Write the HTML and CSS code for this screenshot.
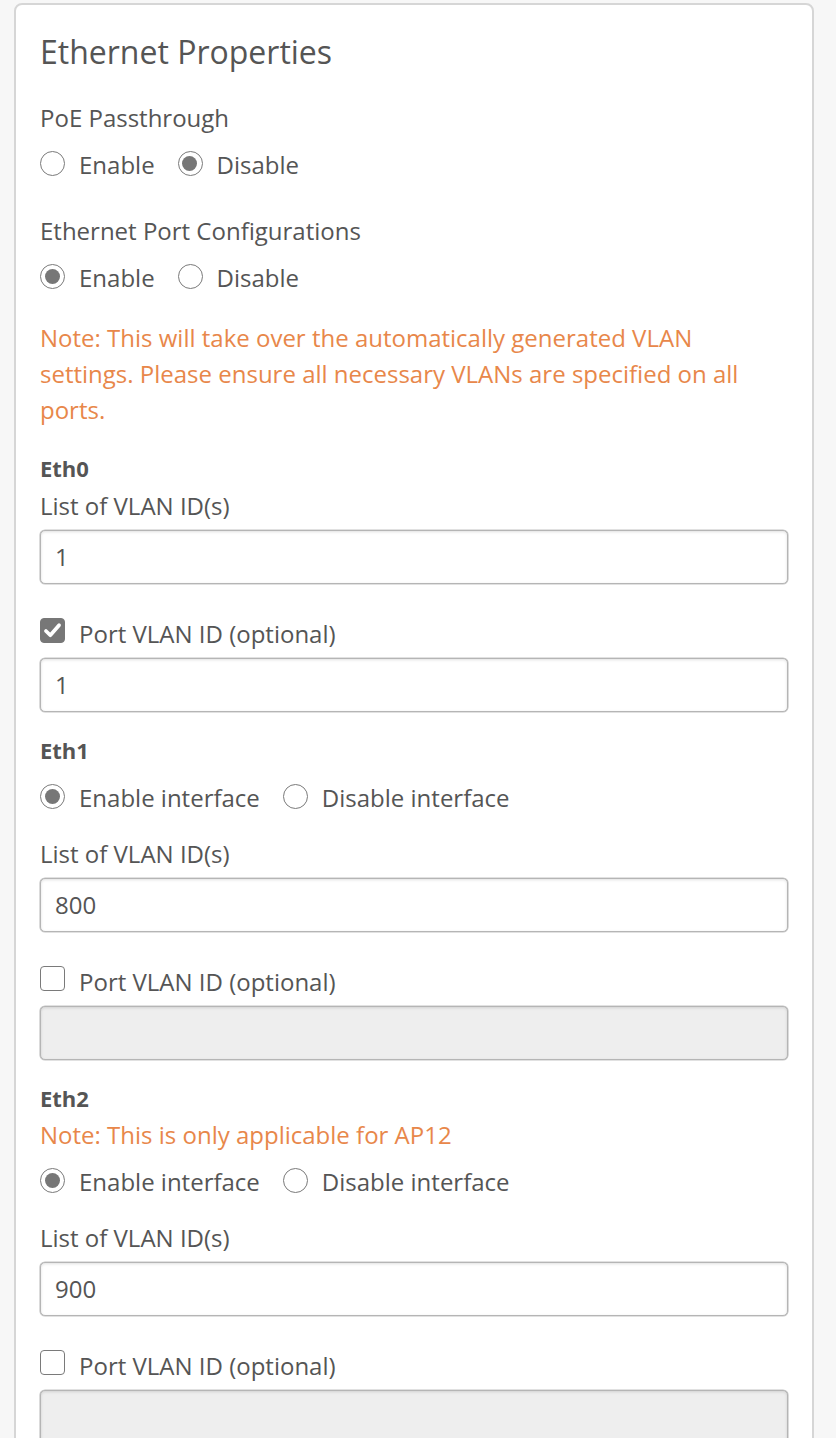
FILE: index.html
```html
<!DOCTYPE html>
<html lang="en">
<head>
<meta charset="utf-8">
<title>Ethernet Properties</title>
<link rel="stylesheet" href="styles.css">
</head>
<body>
<div class="card">
  <h2 class="card-title">Ethernet Properties</h2>

  <div class="group">
    <div class="field-label">PoE Passthrough</div>
    <div class="options">
      <label class="opt"><span class="radio"></span><span>Enable</span></label>
      <label class="opt"><span class="radio checked"></span><span>Disable</span></label>
    </div>
  </div>

  <div class="group">
    <div class="field-label">Ethernet Port Configurations</div>
    <div class="options">
      <label class="opt"><span class="radio checked"></span><span>Enable</span></label>
      <label class="opt"><span class="radio"></span><span>Disable</span></label>
    </div>
  </div>

  <p class="note note-block">Note: This will take over the automatically generated VLAN settings. Please ensure all necessary VLANs are specified on all ports.</p>

  <section class="port port-first">
    <div class="port-title">Eth0</div>
    <div class="field field-tight">
      <div class="field-label-plain">List of VLAN ID(s)</div>
      <div class="input">1</div>
    </div>
    <label class="check-row"><span class="checkbox checked"><svg viewBox="0 0 24 24" width="21" height="21"><path d="M4.5 12.5 L9.5 17.5 L19.5 6" fill="none" stroke="#fff" stroke-width="4.2" stroke-linecap="round" stroke-linejoin="round"/></svg></span><span>Port VLAN ID (optional)</span></label>
    <div class="input">1</div>
  </section>

  <section class="port">
    <div class="port-title">Eth1</div>
    <div class="options options-port">
      <label class="opt"><span class="radio checked"></span><span>Enable interface</span></label>
      <label class="opt"><span class="radio"></span><span>Disable interface</span></label>
    </div>
    <div class="field">
      <div class="field-label-plain">List of VLAN ID(s)</div>
      <div class="input">800</div>
    </div>
    <label class="check-row"><span class="checkbox"></span><span>Port VLAN ID (optional)</span></label>
    <div class="input disabled"></div>
  </section>

  <section class="port">
    <div class="port-title">Eth2</div>
    <p class="note note-inline">Note: This is only applicable for AP12</p>
    <div class="options options-after-note">
      <label class="opt"><span class="radio checked"></span><span>Enable interface</span></label>
      <label class="opt"><span class="radio"></span><span>Disable interface</span></label>
    </div>
    <div class="field">
      <div class="field-label-plain">List of VLAN ID(s)</div>
      <div class="input">900</div>
    </div>
    <label class="check-row"><span class="checkbox"></span><span>Port VLAN ID (optional)</span></label>
    <div class="input disabled"></div>
  </section>
</div>
</body>
</html>
```
FILE: styles.css
```css
html, body {
  margin: 0;
  padding: 0;
  background: #f7f7f7;
}

body {
  font-family: "Open Sans", "Noto Sans", "Liberation Sans", sans-serif;
  font-size: 24px;
  line-height: 36px;
  color: #555;
}

.card {
  box-sizing: border-box;
  width: 800px;
  margin: 3px 0 0 14px;
  padding: 29px 24px 40px 24px;
  background: #fff;
  border: 2px solid #d6d6d6;
  border-radius: 8px;
}

.card-title {
  margin: 0 0 30px;
  font-size: 32px;
  font-weight: 400;
  line-height: 36px;
  color: #555;
}

.group + .group {
  margin-top: 30px;
}

.field-label {
  margin-bottom: 11px;
}

.options {
  display: flex;
  gap: 23px;
}

.opt {
  display: flex;
  align-items: flex-start;
  gap: 14px;
}

.radio {
  box-sizing: border-box;
  flex: none;
  width: 25px;
  height: 25px;
  margin-top: 4px;
  border: 1.5px solid #7a7a7a;
  border-radius: 50%;
  background: #fff;
  position: relative;
}

.radio.checked::after {
  content: "";
  position: absolute;
  left: 3.5px;
  top: 3.5px;
  width: 15px;
  height: 15px;
  border-radius: 50%;
  background: #777;
}

.note {
  margin: 0;
  color: #e8874a;
}

.note-block {
  margin-top: 24px;
  max-width: 730px;
}

.port {
  margin-top: 20px;
}

.port-first {
  margin-top: 22px;
}

.port-title {
  font-size: 22px;
  font-weight: 700;
  line-height: 36px;
}

.options-port {
  margin-top: 12px;
}

.note-inline {
  margin-top: 1px;
}

.options-after-note {
  margin-top: 11px;
}

.field {
  margin-top: 20px;
}

.field-tight {
  margin-top: 2px;
}

.input {
  box-sizing: border-box;
  height: 54px;
  margin-top: 6px;
  padding: 0 14px;
  display: flex;
  align-items: center;
  background: #fff;
  border: 1px solid #b5b5b5;
  border-radius: 5px;
  box-shadow: inset 0 1px 3px rgba(0, 0, 0, 0.12), 0 0 0 0.6px #c4c4c4;
  color: #555;
}

.input.disabled {
  background: #eee;
}

.check-row {
  display: flex;
  align-items: flex-start;
  gap: 14px;
  margin-top: 32px;
}

.checkbox {
  box-sizing: border-box;
  flex: none;
  width: 25px;
  height: 25px;
  margin-top: 1.5px;
  border: 1.5px solid #7a7a7a;
  border-radius: 4px;
  background: #fff;
  display: flex;
  align-items: center;
  justify-content: center;
}

.checkbox.checked {
  background: #777;
  border-color: #777;
}
```
